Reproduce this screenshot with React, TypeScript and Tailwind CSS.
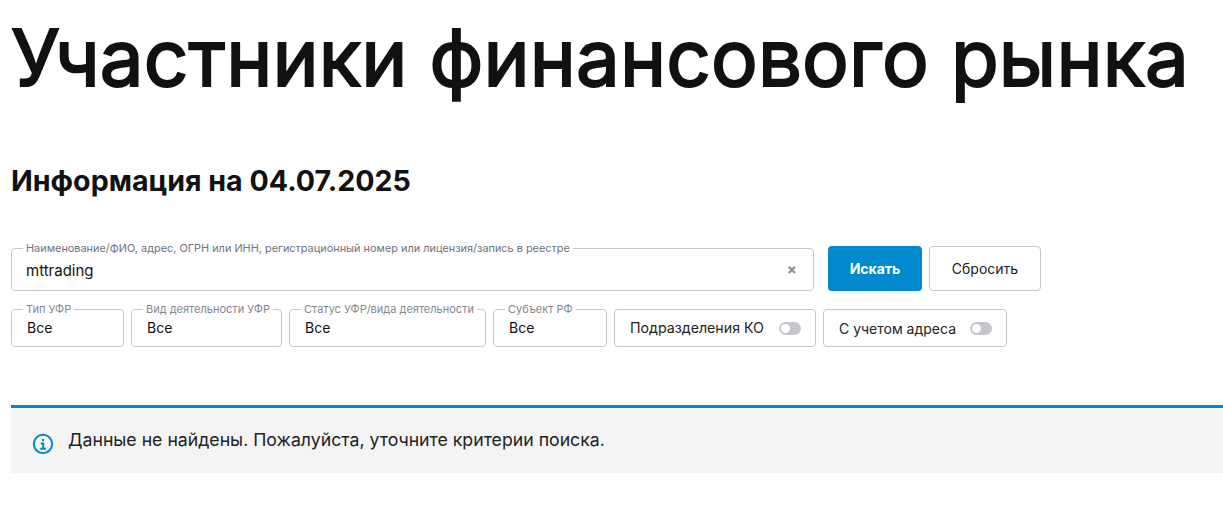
const font = "font-['Inter','Noto_Sans',sans-serif]";

function Field({ label, value, className }: { label: string; value: string; className: string }) {
  return (
    <fieldset className={`h-[43px] rounded-[4px] border border-[#c6c7ca] pl-[11px] pr-2 ${className}`}>
      <legend className="px-[3px] text-[11px] leading-[11px] text-[#84878e]">{label}</legend>
      <div className="pl-[4px] pt-[3px] text-[14px] leading-[20px] text-[#111]">{value}</div>
    </fieldset>
  );
}

function Toggle({ label, className }: { label: string; className: string }) {
  return (
    <div className={`flex h-[38px] items-center justify-between rounded-[4px] border border-[#c6c7ca] pl-[15px] pr-[14px] text-[#222] ${className}`}>
      <span>{label}</span>
      <span className="flex h-[13px] w-[22px] items-center rounded-full bg-[#c4c6ca] pl-[2px]">
        <span className="h-[9px] w-[9px] rounded-full bg-white" />
      </span>
    </div>
  );
}

export default function App() {
  return (
    <div className={`h-[507px] w-[1223px] overflow-hidden bg-white pl-[11px] ${font}`}>
      <h1 className="pt-[8px] text-[78px] font-normal leading-[100px] tracking-[0.15px] text-[#111] whitespace-nowrap [-webkit-text-stroke:2px_#111]">
        Участники финансового рынка
      </h1>
      <h2 className="mt-[55px] text-[28.6px] font-bold leading-[36px] text-[#111]">Информация на 04.07.2025</h2>

      <div className="mt-[44px] flex items-end">
        <fieldset className="relative h-[48px] w-[803px] rounded-[4px] border border-[#c6c7ca] pl-[11px]">
          <legend className="px-[3px] text-[10.9px] leading-[11px] text-[#6f737b]">
            Наименование/ФИО, адрес, ОГРН или ИНН, регистрационный номер или лицензия/запись в реестре
          </legend>
          <div className="pl-[3px] pt-[7px] text-[15px] leading-[20px] text-[#111]">mttrading</div>
          <span className="absolute right-[16px] top-[6px] text-[15px] font-bold leading-[20px] text-[#8a8d93]">×</span>
        </fieldset>
        <button className="ml-[14px] h-[45px] w-[94px] rounded-[4px] bg-[#0089cf] text-[14px] font-bold text-white">Искать</button>
        <button className="ml-[7px] h-[45px] w-[112px] rounded-[4px] border border-[#c6c7ca] text-[14px] text-[#222]">Сбросить</button>
      </div>

      <div className="mt-[13px] flex items-end gap-[7px]">
        <Field label="Тип УФР" value="Все" className="w-[113px]" />
        <Field label="Вид деятельности УФР" value="Все" className="w-[151px]" />
        <Field label="Статус УФР/вида деятельности" value="Все" className="w-[197px]" />
        <Field label="Субъект РФ" value="Все" className="w-[114px]" />
        <Toggle label="Подразделения КО" className="w-[202px] text-[14.2px]" />
        <Toggle label="С учетом адреса" className="w-[184px] text-[14px]" />
      </div>

      <div className="mt-[58px] flex h-[68px] items-center border-t-[3px] border-[#0089cf] bg-[#f4f4f4] pl-[21px]">
        <svg viewBox="0 0 24 24" className="mt-[6px] h-[22px] w-[22px]" fill="none" stroke="#0089cf" strokeWidth="2.2">
          <circle cx="12" cy="12" r="10" />
          <path d="M12 6.5v2.4M9.5 11.5h2.7v5.6M9 17.2h6.2" />
        </svg>
        <span className="ml-[14px] text-[17.7px] text-[#222]">Данные не найдены. Пожалуйста, уточните критерии поиска.</span>
      </div>
    </div>
  );
}
